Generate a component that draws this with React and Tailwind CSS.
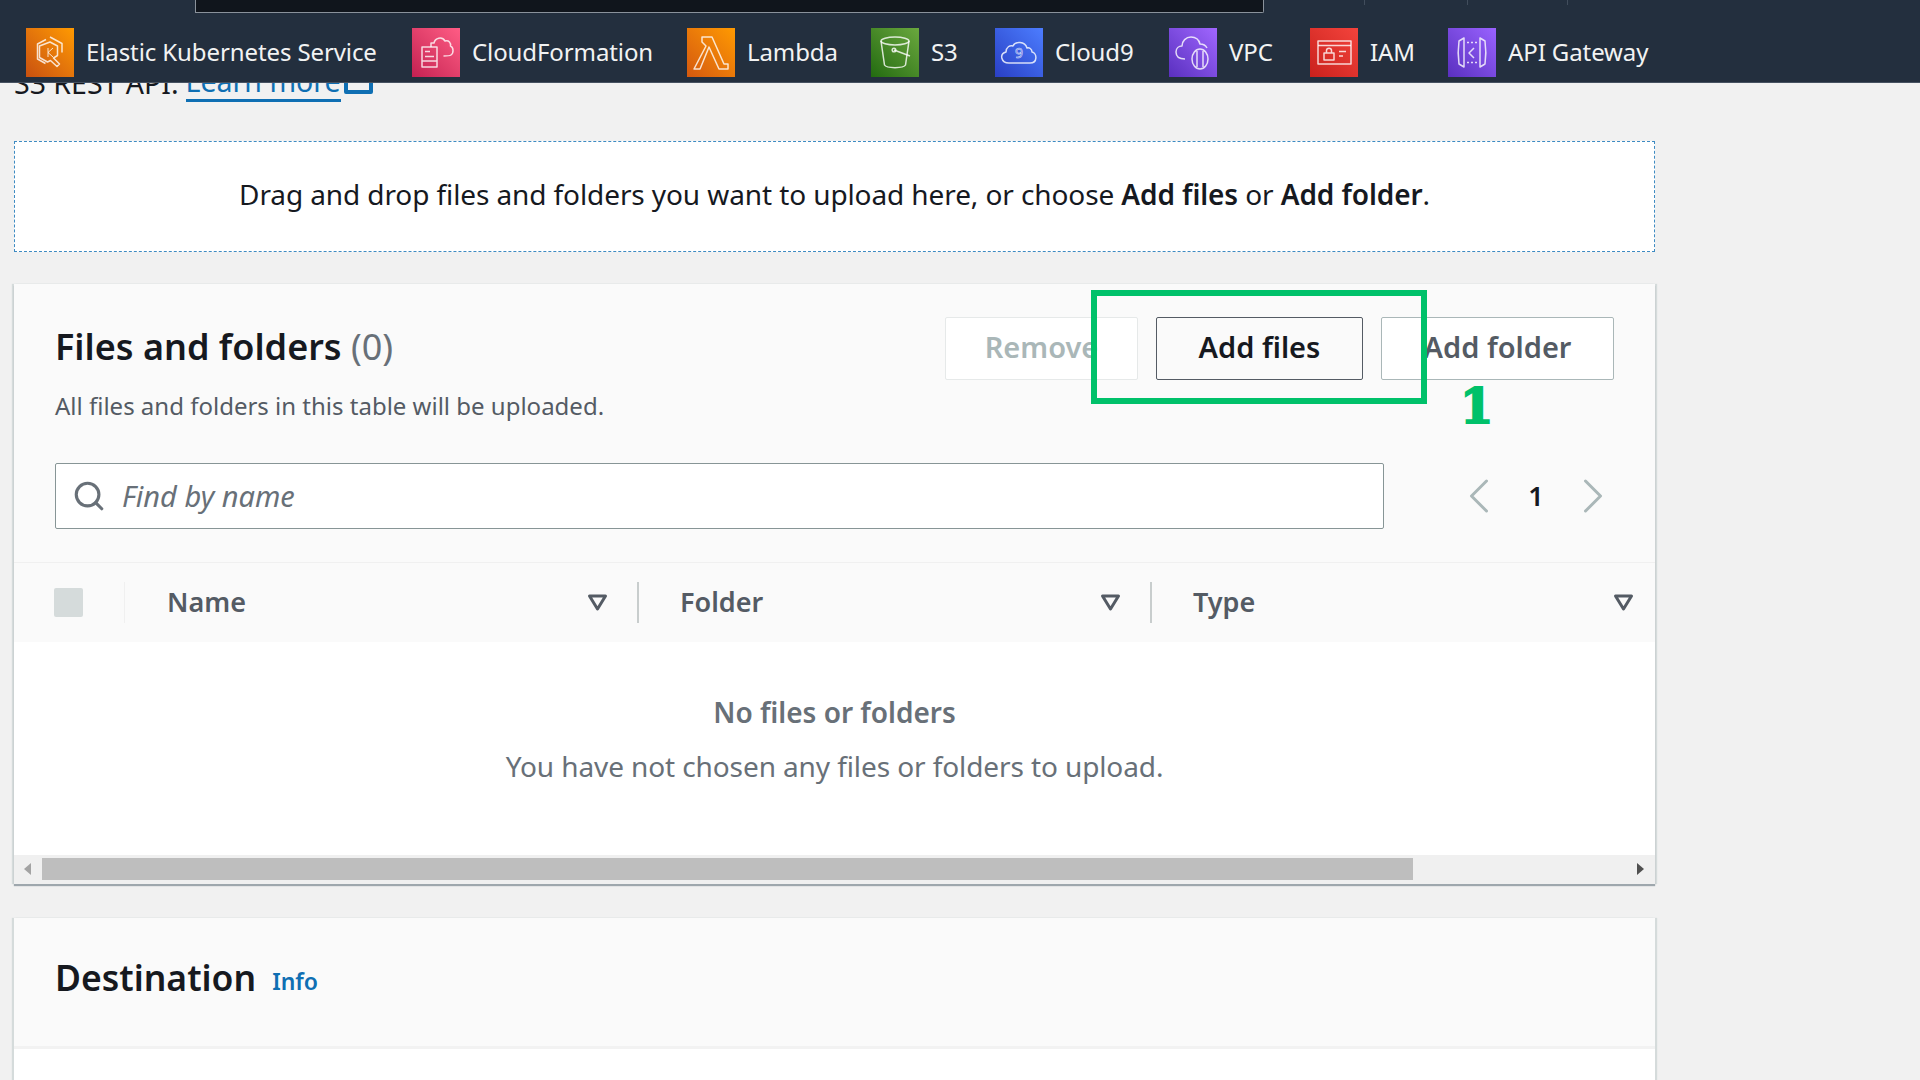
import { Search, ChevronLeft, ChevronRight } from 'lucide-react';

const FONT = "font-['Noto_Sans',sans-serif]";

const SERVICES = [
  {
    label: 'Elastic Kubernetes Service',
    width: 'w-[386px]',
    tile: 'from-[#c8500f] to-[#ff9a00]',
    icon: (
      <>
        <path d="M24 9l12 6.5v9" />
        <path d="M20 11.5L11.5 16v15l8 4.5" />
        <path d="M24 14l7.5 4v9.5l-4 2.5 6 6-2.5 2.5-6.5-6-3 1.5-8-4.5V18z" />
        <path d="M22 20v9M27 20l-5 4.5 5 4.5" strokeWidth="1" />
      </>
    ),
  },
  {
    label: 'CloudFormation',
    width: 'w-[275px]',
    tile: 'from-[#c41f52] to-[#ff5c85]',
    icon: (
      <>
        <path d="M10 19h15v20H10zM13 23.5h5M13 28.5h9M10 33h15" />
        <path d="M19 19v-4h3c1-5 8-7 11-2 4-1 6 2 5.500 5 3 1 3.500 7 .5 9-1.500 1-4 1-7.500 1" />
      </>
    ),
  },
  {
    label: 'Lambda',
    width: 'w-[184px]',
    tile: 'from-[#d4580e] to-[#ff9a00]',
    icon: <path d="M15 9h10l12 27h4v5H32L22 19l-9 22H7l12-23-4-4z" />,
  },
  {
    label: 'S3',
    width: 'w-[124px]',
    tile: 'from-[#226b10] to-[#6aa83e]',
    icon: (
      <>
        <ellipse cx="24" cy="13" rx="14" ry="4" />
        <path d="M10 13l3.500 24c2 3.500 19 3.500 21 0L38 13" />
        <path d="M23 22l16 6" />
        <circle cx="23" cy="22" r="1.800" />
      </>
    ),
  },
  {
    label: 'Cloud9',
    width: 'w-[174px]',
    tile: 'from-[#2a3fc4] to-[#4d7dff]',
    icon: (
      <>
        <path d="M14 35c-8 0-10-9-3-11 0-5 4-7 7-6 2-5 12-5 14 2 2-1 5 1 5 4 5 1 6 11-2 11z" />
        <text
          x="24"
          y="30"
          textAnchor="middle"
          fontSize="14"
          strokeWidth="0.6"
          fill="none"
          fontFamily="Noto Sans, sans-serif"
        >
          9
        </text>
      </>
    ),
  },
  {
    label: 'VPC',
    width: 'w-[141px]',
    tile: 'from-[#5a2fbf] to-[#a166ff]',
    icon: (
      <>
        <path d="M16 31c-6 0-9-3-9-7s3-6 6-6c0-5 4-9 9-9s8 3 9 7c3 0 6 2 7 4" />
        <ellipse cx="31" cy="31" rx="8" ry="10" />
        <path d="M28 23v16M34 23v16" />
      </>
    ),
  },
  {
    label: 'IAM',
    width: 'w-[138px]',
    tile: 'from-[#c9201c] to-[#f4433c]',
    icon: (
      <>
        <path d="M8 13h33v23H8z" />
        <path d="M8 17.500h33" />
        <path d="M14 25h10v7H14zM16.500 25v-2.500c0-3 5-3 5 0V25" />
        <path d="M29 23.500h7M29 28h4" />
      </>
    ),
  },
  {
    label: 'API Gateway',
    width: '',
    tile: 'from-[#5a2fbf] to-[#9a62ff]',
    icon: (
      <>
        <path d="M11 13l5-3v29l-5-3c-1-7-1-16 0-23zM37 13l-5-3v29l5-3c1-7 1-16 0-23z" />
        <path d="M19 14.500h11M19 34.500h11" strokeDasharray="2 2" />
        <path d="M26 20l-5 5 5 5" />
      </>
    ),
  },
];

const COLUMNS = [
  { label: 'Name', width: 'w-[514px]', pad: 'pl-[42px] pr-[29px]', divider: true },
  { label: 'Folder', width: 'w-[513px]', pad: 'pl-[41px] pr-[29px]', divider: true },
  { label: 'Type', width: 'flex-1', pad: 'pl-[41px] pr-[21px]', divider: false },
];

function ServiceItem({ service }) {
  return (
    <div className={`flex items-center shrink-0 ${service.width}`}>
      <div className={`w-[48px] h-[49px] shrink-0 bg-linear-to-tr ${service.tile}`}>
        <svg
          viewBox="0 0 48 49"
          width="48"
          height="49"
          fill="none"
          stroke="#ffffff"
          strokeOpacity="0.8"
          strokeWidth="1.500"
          strokeLinejoin="round"
        >
          {service.icon}
        </svg>
      </div>
      <span className="ml-[12px] -mt-[2px] text-[24px] leading-none tracking-[-0.1px] text-[#f2f3f3] whitespace-nowrap">
        {service.label}
      </span>
    </div>
  );
}

function FilterIcon() {
  return (
    <svg viewBox="0 0 21 18" width="21" height="18" fill="none" stroke="#545b64" strokeWidth="3">
      <path d="M2.500 2h16l-8 13z" strokeLinejoin="round" />
    </svg>
  );
}

export default function App() {
  return (
    <div className={`h-screen w-full overflow-hidden bg-[#f1f1f1] ${FONT}`}>
      {/* Top nav */}
      <div className="relative z-10 h-[83px] bg-[#232f3e] border-b border-[#5f6b7a]/60">
        <div className="flex h-[13px]">
          <div className="ml-[195px] w-[1069px] h-[13px] bg-[#10151c] border-x border-b border-[#8a929b] rounded-br-[2px]" />
          <div className="ml-[100px] w-px h-[5px] bg-[#414d5c]" />
          <div className="ml-[102px] w-px h-[5px] bg-[#414d5c]" />
          <div className="ml-[99px] w-px h-[5px] bg-[#414d5c]" />
        </div>
        <div className="flex items-center pl-[26px] pt-[15px]">
          {SERVICES.map((s) => (
            <ServiceItem key={s.label} service={s} />
          ))}
        </div>
      </div>

      {/* Page content, scrolled up under the nav */}
      <div className="pl-[14px] w-[1655px] -mt-[24px]">
        <div className="h-[48px] flex items-center text-[28.5px] leading-none text-[#16191f] whitespace-nowrap">
          <span>S3 REST API.</span>
          <span className="ml-[7px] text-[#0f6fb3] border-b-[3px] border-[#0f6fb3] leading-[35px]">Learn more</span>
          <span className="ml-[3px] w-[29px] h-[28px] border-[4px] border-[#0f6fb3] rounded-[2px] -mt-[6px]" />
        </div>

        {/* Drop zone */}
        <div className="mt-[34px] h-[111px] pb-[5px] bg-white border-[1.500px] border-dashed border-[#0f6fb3]/80 flex items-center justify-center text-[28px] text-[#16191f] tracking-[-0.1px] whitespace-nowrap">
          <span>
            Drag and drop files and folders you want to upload here, or choose{' '}
            <span className="font-semibold">Add files</span> or <span className="font-semibold">Add folder</span>.
          </span>
        </div>

        {/* Files and folders card */}
        <div className="relative mt-[32px] h-[600px] bg-[#fafafa] shadow-[0_2px_1px_#9ea7ad,2px_0_1px_#d5dbdb,-2px_0_1px_#d5dbdb] flex flex-col">
          <div className="h-[279px] px-[41px] shrink-0 border-b border-[#f0f0f0]">
            <div className="flex items-start justify-between">
              <div className="pt-[40px]">
                <h2 className="text-[36px] leading-[46px] font-semibold text-[#16191f]">
                  Files and folders <span className="font-normal text-[#687078]">(0)</span>
                </h2>
                <p className="mt-[20px] text-[24px] leading-[32px] text-[#545b64]">
                  All files and folders in this table will be uploaded.
                </p>
              </div>
              <div className="flex pt-[33px] gap-[18px]">
                <div className="w-[193px] h-[63px] pb-[3px] bg-white border border-[#e6e9e9] rounded-[2px] flex items-center justify-center text-[29px] font-semibold text-[#aab7b8]">
                  Remove
                </div>
                <div className="w-[207px] h-[63px] pb-[3px] bg-[#fafafa] border-[1.500px] border-[#545b64] rounded-[2px] flex items-center justify-center text-[29px] font-semibold text-[#16191f]">
                  Add files
                </div>
                <div className="w-[233px] h-[63px] pb-[3px] bg-white border-[1.500px] border-[#aab7b8] rounded-[2px] flex items-center justify-center text-[29px] font-semibold text-[#545b64]">
                  Add folder
                </div>
              </div>
            </div>

            <div className="mt-[41px] flex items-center">
              <div className="w-[1329px] h-[66px] shrink-0 bg-white border-[1.500px] border-[#879596] rounded-[2px] flex items-center pl-[16px]">
                <Search size={34} strokeWidth={2.2} className="text-[#687078]" />
                <span className="ml-[16px] text-[29px] italic text-[#687078]">Find by name</span>
              </div>
              <div className="ml-[65px] flex items-center shrink-0">
                <ChevronLeft size={60} strokeWidth={1.200} className="text-[#aab7b8]" />
                <span className="w-[54px] text-center text-[27px] font-semibold text-[#16191f]">1</span>
                <ChevronRight size={60} strokeWidth={1.200} className="text-[#aab7b8]" />
              </div>
            </div>
          </div>

          {/* Table header */}
          <div className="h-[79px] shrink-0 flex items-center">
            <div className="w-[111px] shrink-0 flex items-center pl-[40px] h-[41px] border-r border-[#f0f0f0]">
              <div className="w-[29px] h-[29px] bg-[#d5dbdb] rounded-[2px]" />
            </div>
            {COLUMNS.map((c) => (
              <div
                key={c.label}
                className={`${c.width} ${c.pad} h-[41px] flex items-center justify-between text-[27px] font-semibold text-[#545b64] ${
                  c.divider ? 'border-r-2 border-[#c8cdcd]' : ''
                }`}
              >
                <span>{c.label}</span>
                <FilterIcon />
              </div>
            ))}
          </div>

          {/* Empty state */}
          <div className="flex-1 bg-white flex flex-col items-center pt-[48px]">
            <div className="text-[28px] leading-[44px] font-semibold text-[#687078]">No files or folders</div>
            <div className="mt-[10px] text-[28px] leading-[44px] text-[#687078] tracking-[-0.1px]">
              You have not chosen any files or folders to upload.
            </div>
          </div>

          {/* Horizontal scrollbar */}
          <div className="h-[29px] pb-[2px] shrink-0 bg-[#f0f0f0] flex items-center">
            <div className="w-[28px] flex justify-end">
              <div className="w-0 h-0 border-y-[6px] border-y-transparent border-r-[7px] border-r-[#a3a3a3] mr-[11px]" />
            </div>
            <div className="w-[1371px] h-[22px] bg-[#bebebe]" />
            <div className="flex-1 flex justify-end">
              <div className="w-0 h-0 border-y-[6px] border-y-transparent border-l-[7px] border-l-[#505050] mr-[11px]" />
            </div>
          </div>

          {/* Step annotation over the buttons */}
          <div className="absolute left-[1077px] top-[6px] w-[336px] h-[114px] border-[6px] border-[#00c16a]" />
          <div className="absolute left-[1446px] top-[94px] font-['DejaVu_Serif',serif] font-bold text-[48px] leading-[56px] text-[#00c16a] [-webkit-text-stroke:2px_#00c16a]">
            1
          </div>
        </div>

        {/* Destination card */}
        <div className="mt-[34px] bg-[#fafafa] shadow-[2px_0_1px_#d5dbdb,-2px_0_1px_#d5dbdb]">
          <div className="h-[131px] px-[41px] pb-[8px] flex items-center border-b-[3px] border-[#f2f2f2]">
            <h2 className="text-[35.5px] font-semibold text-[#16191f]">Destination</h2>
            <span className="ml-[16px] mt-[6px] text-[23px] font-semibold text-[#0f6fb3]">Info</span>
          </div>
          <div className="h-[40px] bg-white" />
        </div>
      </div>
    </div>
  );
}
